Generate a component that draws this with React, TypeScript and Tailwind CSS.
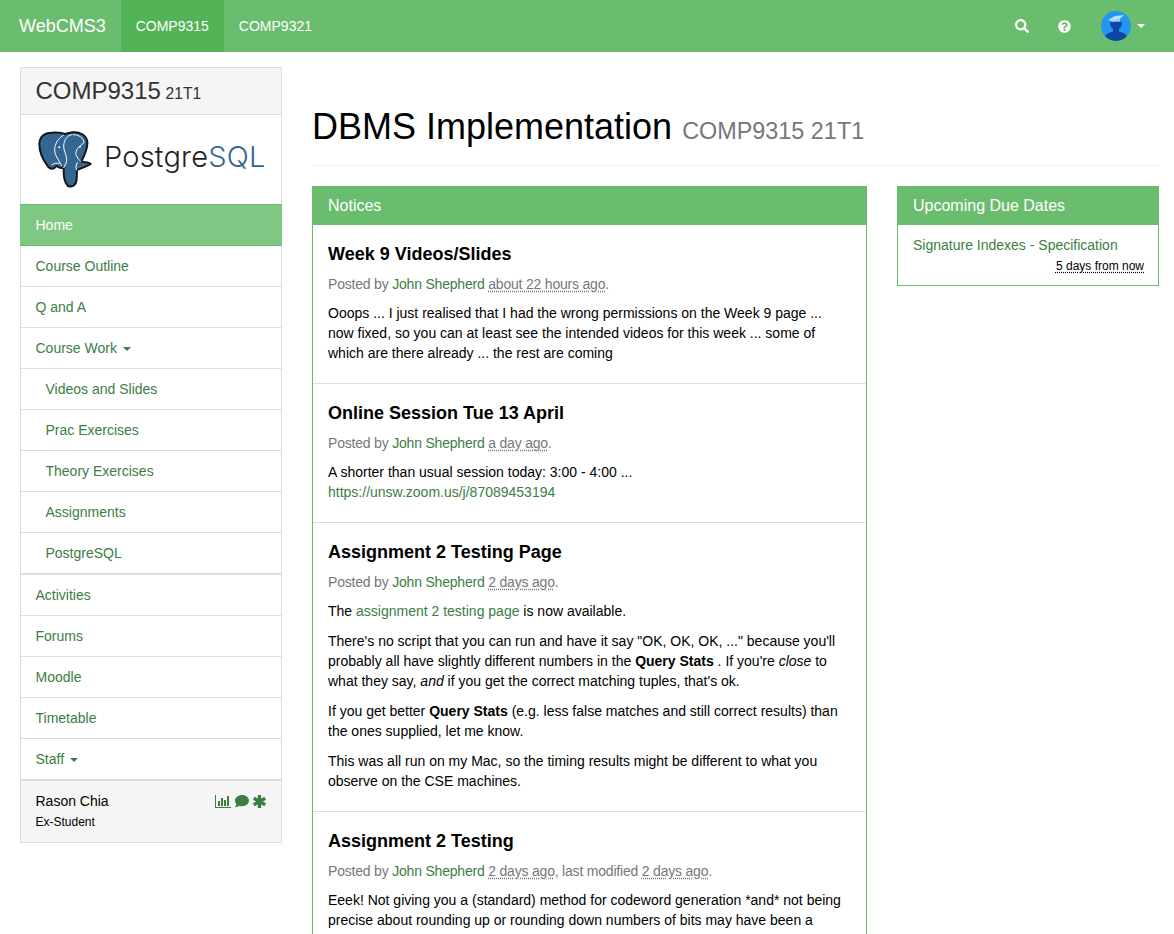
import { FaSearch, FaQuestionCircle, FaComment } from "react-icons/fa";

const F = "font-['Liberation_Sans',Arial,sans-serif]";

function Caret({ className }: { className: string }) {
  return <span className={`inline-block w-0 h-0 ml-[2px] align-middle border-x-4 border-x-transparent border-t-4 ${className}`} />;
}

function SideItem({ label, sub, caret, last }: { label: string; sub?: boolean; caret?: boolean; last?: boolean }) {
  return (
    <a className={`block border-[#ddd] text-[14px] leading-[40px] text-[#3c7d45] ${sub ? "pl-[24.5px]" : "pl-[14.5px]"} ${last ? "h-[42px] border-b-2" : "h-[41px] border-b"}`}>
      {label}
      {caret && <> <Caret className="border-t-[#3c7d45]" /></>}
    </a>
  );
}

function Elephant() {
  return (
    <svg width="54" height="57" viewBox="20 23 162 171">
      <path
        d="M60 28C40 28 25 40 24 62c0 23 11 48 26 68 8 10 18 8 25-2 10 7 17 7 22 5 0 22 0 42 13 55 15 5 25-3 26-23l1-25c13-5 28-10 41-18-6-7-18-4-28-7 10-20 20-40 18-60-3-20-23-30-43-28-10 1-17 3-25 5-12-6-25-5-40-4z"
        fill="#336791"
        stroke="#161616"
        strokeWidth="6"
        strokeLinejoin="round"
      />
      <path
        d="M96 36C82 44 70 60 70 80c0 18 14 30 20 46M122 34c-14 2-24 14-25 34 0 14 8 24 9 40 1 10-5 18-9 25M126 34c18 0 30 10 32 24-8 8-20 12-24 28-2 10 6 20 14 28M62 124c6-4 14-6 22-4M136 140c-4-8-2-16 2-22"
        fill="none"
        stroke="#fff"
        strokeWidth="3"
        strokeLinecap="round"
      />
      <circle cx="84" cy="72" r="3" fill="#fff" />
      <circle cx="146" cy="70" r="3" fill="#fff" />
    </svg>
  );
}

function Notice({ title, meta, children, last }: { title: string; meta: React.ReactNode; children: React.ReactNode; last?: boolean }) {
  return (
    <div className={`px-[15px] pt-[15px] pb-[10px] ${last ? "" : "border-b border-[#ddd]"}`}>
      <h4 className="text-[18px] font-bold leading-[28px] text-black">{title}</h4>
      <p className="mt-[6px] mb-[9px] text-[14px] leading-[20px] tracking-[-0.2px] text-[#777]">{meta}</p>
      {children}
    </div>
  );
}

const A = ({ children }: { children: React.ReactNode }) => <a className="text-[#3c7d45]">{children}</a>;
const Ago = ({ children }: { children: React.ReactNode }) => (
  <span className="underline decoration-dotted underline-offset-[2px]">{children}</span>
);
const P = ({ children }: { children: React.ReactNode }) => <p className="mb-[10px] text-[14px] leading-[20px]">{children}</p>;

export default function App() {
  return (
    <div className={`${F} h-[934px] overflow-hidden bg-white text-black`}>
      <nav className="flex h-[52px] items-stretch bg-[#6abd6e] pl-[4px] text-white">
        <a className="px-[15px] text-[18px] leading-[52px]">WebCMS3</a>
        <a className="bg-[#53b357] px-[15px] text-[14px] leading-[52px]">COMP9315</a>
        <a className="px-[15px] text-[14px] leading-[52px]">COMP9321</a>
        <div className="ml-auto flex items-center pr-[29px]">
          <FaSearch className="mr-[29px] h-[14px] w-[14px]" />
          <FaQuestionCircle className="mr-[30px] h-[13px] w-[13px]" />
          <svg width="30" height="30" viewBox="0 0 30 30" className="mr-[4px]">
            <defs>
              <clipPath id="avatarClip">
                <circle cx="15" cy="15" r="15" />
              </clipPath>
            </defs>
            <circle cx="15" cy="15" r="15" fill="#2196f3" />
            <g clipPath="url(#avatarClip)">
              <path d="M3 30c0-5 2-8 9-9.500V18c-2-1-3-4-3-7h12c0 3-1 6-3 7v2.500c7 1.500 9 4.500 9 9.500z" fill="#0d47a1" />
            </g>
            <path d="M7 9l7-4 9-1-5 4.500-5 2z" fill="#bbdefb" />
            <path d="M10 10l9-2v2.500h-9z" fill="#90caf9" />
          </svg>
          <Caret className="border-t-white" />
        </div>
      </nav>

      <div className="flex items-start pt-[15px]">
        <aside className="ml-[20px] w-[262px] shrink-0 border border-[#ddd]">
          <div className="h-[47px] border-b border-[#ddd] bg-[#f5f5f5] pl-[14.5px] text-[24px] leading-[46px] text-[#333]">
            COMP9315 <small className="ml-[-2px] text-[15.6px] text-[#333]">21T1</small>
          </div>
          <div className="flex h-[89px] items-center gap-[12px] pl-[17px]">
            <Elephant />
            <span className="-mt-[5px] font-['Inter',sans-serif] text-[29px] font-light tracking-[0.2px] text-[#222]">
              Postgre<span className="text-[#336791]">SQL</span>
            </span>
          </div>
          <a className="-mx-px block h-[42px] border-y border-[#6abd6e] bg-[#7fc883] pl-[15.5px] text-[14px] leading-[40px] text-white">Home</a>
          <SideItem label="Course Outline" />
          <SideItem label="Q and A" />
          <SideItem label="Course Work" caret />
          <SideItem label="Videos and Slides" sub />
          <SideItem label="Prac Exercises" sub />
          <SideItem label="Theory Exercises" sub />
          <SideItem label="Assignments" sub />
          <SideItem label="PostgreSQL" sub last />
          <SideItem label="Activities" />
          <SideItem label="Forums" />
          <SideItem label="Moodle" />
          <SideItem label="Timetable" />
          <SideItem label="Staff" caret last />
          <div className="h-[61px] bg-[#f5f5f5] pl-[14.5px] pr-[15px] pt-[10px]">
            <div className="flex items-center justify-between text-[14px] leading-[20px]">
              <span>Rason Chia</span>
              <span className="flex items-center gap-[4px] text-[#3c7d45]">
                <svg width="16" height="13" viewBox="0 0 16 13" fill="currentColor">
                  <path d="M0 0h1v12h15v1H0zM3 6h2v5H3zM6 3h2v8H6zM9 5h2v6H9zM12 1h2v10h-2z" />
                </svg>
                <FaComment className="h-[14px] w-[14px]" />
                <svg width="13" height="13" viewBox="0 0 13 13" stroke="currentColor" strokeWidth="3.4">
                  <path d="M6.500 0v13M0.800 3.200l11.400 6.600M12.200 3.200L0.800 9.800" />
                </svg>
              </span>
            </div>
            <div className="mt-[1px] text-[12px] leading-[20px]">Ex-Student</div>
          </div>
        </aside>

        <main className="ml-[30px] w-[848px] shrink-0">
          <div className="mt-[40px] border-b border-[#eee] pb-[14px]">
            <h1 className="text-[36px] leading-[40px]">
              DBMS Implementation <small className="text-[23.4px] text-[#777]">COMP9315 21T1</small>
            </h1>
          </div>
          <div className="mt-[20px] flex items-start">
            <section className="w-[555px] shrink-0 border border-[#6abd6e]">
              <div className="h-[38px] bg-[#6abd6e] pl-[15px] text-[16px] leading-[37px] text-white">Notices</div>
              <Notice
                title="Week 9 Videos/Slides"
                meta={<>Posted by <A>John Shepherd</A> <Ago>about 22 hours ago</Ago>.</>}
              >
                <P>Ooops ... I just realised that I had the wrong permissions on the Week 9 page ... now fixed, so you can at least see the intended videos for this week ... some of which are there already ... the rest are coming</P>
              </Notice>
              <Notice
                title="Online Session Tue 13 April"
                meta={<>Posted by <A>John Shepherd</A> <Ago>a day ago</Ago>.</>}
              >
                <P>A shorter than usual session today: 3:00 - 4:00 ...<br /><A>https://unsw.zoom.us/j/87089453194</A></P>
              </Notice>
              <Notice
                title="Assignment 2 Testing Page"
                meta={<>Posted by <A>John Shepherd</A> <Ago>2 days ago</Ago>.</>}
              >
                <P>The <A>assignment 2 testing page</A> is now available.</P>
                <P>There's no script that you can run and have it say "OK, OK, OK, ..." because you'll probably all have slightly different numbers in the <b>Query Stats</b> . If you're <i>close</i> to what they say, <i>and</i> if you get the correct matching tuples, that's ok.</P>
                <P>If you get better <b>Query Stats</b> (e.g. less false matches and still correct results) than the ones supplied, let me know.</P>
                <P>This was all run on my Mac, so the timing results might be different to what you observe on the CSE machines.</P>
              </Notice>
              <Notice
                title="Assignment 2 Testing"
                meta={<>Posted by <A>John Shepherd</A> <Ago>2 days ago</Ago>, last modified <Ago>2 days ago</Ago>.</>}
                last
              >
                <P>Eeek! Not giving you a (standard) method for codeword generation *and* not being precise about rounding up or rounding down numbers of bits may have been a</P>
              </Notice>
            </section>
            <section className="ml-[30px] w-[262px] shrink-0 border border-[#6abd6e]">
              <div className="h-[38px] bg-[#6abd6e] pl-[15px] text-[16px] leading-[37px] text-white">Upcoming Due Dates</div>
              <div className="pl-[15px] pr-[14px] pt-[10px] pb-[9px] text-[14px] leading-[20px]">
                <a className="block text-[#3c7d45]">Signature Indexes - Specification</a>
                <div className="mt-[1px] text-right text-[12px] leading-[20px]">
                  <span className="underline decoration-dotted underline-offset-[2px]">5 days from now</span>
                </div>
              </div>
            </section>
          </div>
        </main>
      </div>
    </div>
  );
}
